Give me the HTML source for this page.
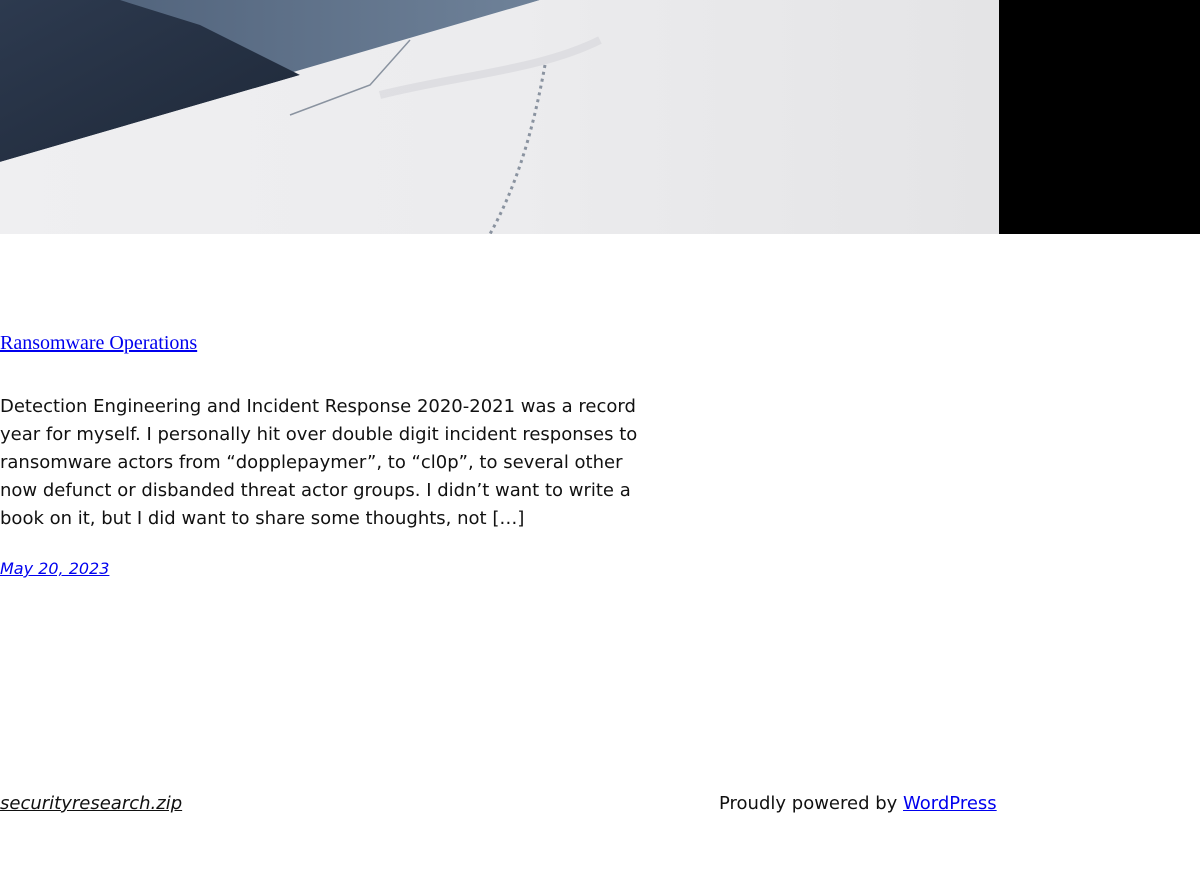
<!DOCTYPE html>
<html><head><style>
body{margin:0;background:#fff;font-family:"DejaVu Sans",sans-serif;}
.hero{position:absolute;left:0;top:0;width:1200px;height:234px;background:#000;}
a{color:#0000ee;}
.t{position:absolute;left:0;top:332px;font-family:"Liberation Serif",serif;font-size:20px;}
.p{position:absolute;left:0;top:393px;width:648px;font-size:18px;line-height:28px;color:#111;margin:0;}
.d{position:absolute;left:0;top:559px;font-size:16px;font-style:italic;}
.f1{position:absolute;left:0;top:793px;font-size:18px;font-style:italic;color:#111;}
.f2{position:absolute;left:719px;top:793px;font-size:18px;color:#111;}
</style></head><body>
<div class="hero">
<svg width="999" height="234" viewBox="0 0 999 234">
<defs>
<linearGradient id="m" x1="0" y1="0" x2="1" y2="1"><stop offset="0" stop-color="#2d3a4f"/><stop offset="1" stop-color="#1e2838"/></linearGradient>
<linearGradient id="m2" x1="0" y1="0" x2="1" y2="0"><stop offset="0" stop-color="#4a5c75"/><stop offset="1" stop-color="#6f8299"/></linearGradient>
<linearGradient id="s" x1="0" y1="0" x2="1" y2="0"><stop offset="0" stop-color="#efeff1"/><stop offset="0.5" stop-color="#ececee"/><stop offset="1" stop-color="#e4e4e6"/></linearGradient>
</defs>
<rect width="999" height="234" fill="url(#s)"/>
<polygon points="90,0 540,0 300,70 0,160 0,0" fill="url(#m2)"/>
<polygon points="0,0 120,0 200,25 260,55 300,75 0,162" fill="url(#m)"/>
<polygon points="0,162 300,75 420,38 540,0 999,0 999,234 0,234" fill="url(#s)"/>
<path d="M545,65 C535,120 520,180 490,234" stroke="#8a93a0" stroke-width="3" stroke-dasharray="3 4" fill="none"/>
<path d="M410,40 L370,85 L290,115" stroke="#8a93a0" stroke-width="1.5" fill="none"/>
<path d="M380,95 C460,75 540,70 600,40" stroke="#d5d6da" stroke-width="8" fill="none" opacity="0.6"/>
</svg>
</div>
<a class="t" href="#">Ransomware Operations</a>
<p class="p">Detection Engineering and Incident Response 2020-2021 was a record year for myself. I personally hit over double digit incident responses to ransomware actors from “dopplepaymer”, to “cl0p”, to several other now defunct or disbanded threat actor groups. I didn’t want to write a book on it, but I did want to share some thoughts, not […]</p>
<a class="d" href="#">May 20, 2023</a>
<a class="f1" href="#" style="color:#111">securityresearch.zip</a>
<div class="f2">Proudly powered by <a href="#">WordPress</a></div>
</body></html>
